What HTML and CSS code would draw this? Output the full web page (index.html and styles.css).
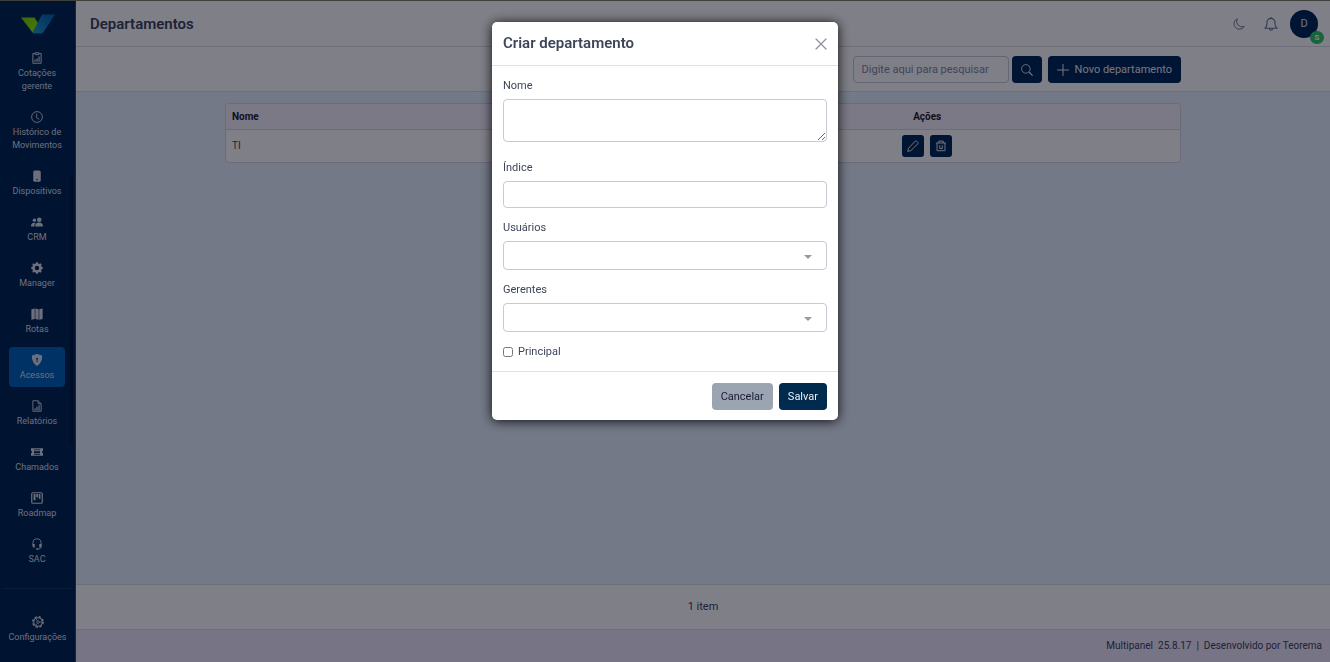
FILE: index.html
```html
<!DOCTYPE html>
<html lang="pt-BR">
<head>
  <meta charset="UTF-8">
  <meta name="viewport" content="width=device-width, initial-scale=1">
  <title>Departamentos</title>
  <link rel="stylesheet" href="styles.css">
</head>
<body>
  <div class="app">

    <!-- Sidebar -->
    <aside class="sidebar">
      <a href="#" class="logo" aria-label="Início">
        <svg width="34" height="20" viewBox="0 0 34 20">
          <defs>
            <linearGradient id="logoBlue" x1="1" y1="0" x2="0" y2="1">
              <stop offset="0" stop-color="#0062ae"/>
              <stop offset="1" stop-color="#22a0c8"/>
            </linearGradient>
            <linearGradient id="logoGreen" x1="0" y1="0" x2="1" y2="1">
              <stop offset="0" stop-color="#78d800"/>
              <stop offset="1" stop-color="#96f000"/>
            </linearGradient>
          </defs>
          <path d="M0 3.5h13.5l4.5 7-6.5 8z" fill="url(#logoGreen)"/>
          <path d="M21 .5h13L22.5 18a3 3 0 0 1-2.5 1.500H13a2 2 0 0 1-1.500-1z" fill="url(#logoBlue)"/>
        </svg>
      </a>
      <nav class="menu">
        <a href="#" class="menu-item">
          <svg class="icon" viewBox="0 0 16 16"><path d="M5 2H2.500v13h11V2H11M5.500 1h5v2.500h-5z" fill="none" stroke="currentColor" stroke-width="1.300"/><path d="M4.500 10h1.600v3H4.500zM7.200 8.500h1.600V13H7.200zM9.900 6h1.600v7H9.900z"/></svg>
          <span>Cotações gerente</span>
        </a>
        <a href="#" class="menu-item">
          <svg class="icon" viewBox="0 0 16 16"><circle cx="8" cy="8" r="7.200" fill="none" stroke="currentColor" stroke-width="1.200"/><path d="M7.500 3.500V9l3.500 2" fill="none" stroke="currentColor" stroke-width="1.200"/></svg>
          <span>Histórico de Movimentos</span>
        </a>
        <a href="#" class="menu-item">
          <svg class="icon" viewBox="0 0 16 16"><path fill-rule="evenodd" d="M5 .5h6a2 2 0 0 1 2 2v11a2 2 0 0 1-2 2H5a2 2 0 0 1-2-2v-11a2 2 0 0 1 2-2zM8 11.500a1 1 0 1 0 0 2 1 1 0 0 0 0-2z"/></svg>
          <span>Dispositivos</span>
        </a>
        <a href="#" class="menu-item">
          <svg class="icon" viewBox="0 0 16 16"><circle cx="11" cy="5" r="3"/><circle cx="4.500" cy="5.500" r="2.300"/><path d="M6.500 14c-1 0-1-1-1-1 0-1.500 1.500-4.200 5.200-4.200S16 11.500 16 13c0 0 0 1-1 1zM4.500 14H1c-1 0-1-1-1-1 0-1.500 1.200-4 4.500-4 .8 0 1.300.1 1.800.3C5 10.500 4.300 12 4.500 14z"/></svg>
          <span>CRM</span>
        </a>
        <a href="#" class="menu-item">
          <svg class="icon" viewBox="0 0 16 16"><path d="M9.405 1.050c-.413-1.400-2.397-1.400-2.810 0l-.1.340a1.464 1.464 0 0 1-2.105.872l-.31-.17c-1.283-.698-2.686.705-1.987 1.987l.169.311c.446.820.023 1.841-.872 2.105l-.34.1c-1.400.413-1.400 2.397 0 2.810l.34.1a1.464 1.464 0 0 1 .872 2.105l-.17.310c-.698 1.283.705 2.686 1.987 1.987l.311-.169a1.464 1.464 0 0 1 2.105.872l.1.340c.413 1.400 2.397 1.400 2.810 0l.1-.34a1.464 1.464 0 0 1 2.105-.872l.31.170c1.283.698 2.686-.705 1.987-1.987l-.169-.311a1.464 1.464 0 0 1 .872-2.105l.34-.1c1.400-.413 1.400-2.397 0-2.810l-.34-.1a1.464 1.464 0 0 1-.872-2.105l.17-.31c.698-1.283-.705-2.686-1.987-1.987l-.311.169a1.464 1.464 0 0 1-2.105-.872zM8 10.930a2.929 2.929 0 1 1 0-5.860 2.929 2.929 0 0 1 0 5.860z"/></svg>
          <span>Manager</span>
        </a>
        <a href="#" class="menu-item">
          <svg class="icon" viewBox="0 0 16 16"><path d="M.5 1.500L5 .5v14l-4.500 1zM5.800.5l4.400 1v14l-4.400-1zM11 1.500l4.500-1v14l-4.500 1z"/></svg>
          <span>Rotas</span>
        </a>
        <a href="#" class="menu-item active">
          <svg class="icon" viewBox="0 0 16 16"><path fill-rule="evenodd" d="M8 0c1 0 3.500 1 6 1.800.5.200.8.600.8 1 .4 5-1.800 10.200-6.800 13.200C3 13 .8 7.800 1.200 2.800c0-.4.300-.8.800-1C4.500 1 7 0 8 0zm0 5a1.500 1.500 0 0 0-.5 2.900L7 10.500h2l-.5-2.600A1.500 1.500 0 0 0 8 5z"/></svg>
          <span>Acessos</span>
        </a>
        <a href="#" class="menu-item">
          <svg class="icon" viewBox="0 0 16 16"><path d="M9.500 1h-7v14h11V5zM9.500 1v4h4" fill="none" stroke="currentColor" stroke-width="1.200"/><path d="M4.500 11h1.500v3H4.500zM7.200 9h1.600v5H7.200zM10 7h1.500v7H10z"/></svg>
          <span>Relatórios</span>
        </a>
        <a href="#" class="menu-item">
          <svg class="icon" viewBox="0 0 16 16"><path fill-rule="evenodd" d="M0 3h16v3.500a1.500 1.500 0 0 0 0 3V13H0V9.500a1.500 1.500 0 0 0 0-3zm4 1.500v1h8v-1zM4 7v2.500h8V7zm0 3.800v1h8v-1z"/></svg>
          <span>Chamados</span>
        </a>
        <a href="#" class="menu-item">
          <svg class="icon" viewBox="0 0 16 16"><rect x="1" y="1" width="14" height="14" rx="1.500" fill="none" stroke="currentColor" stroke-width="1.600"/><path d="M3.500 2.500H6V11H3.500zM7 2.500h2.300V7H7zM10.300 2.500h2.300V9h-2.300z"/></svg>
          <span>Roadmap</span>
        </a>
        <a href="#" class="menu-item">
          <svg class="icon" viewBox="0 0 16 16"><path d="M2.600 9V6.500a5.400 5.400 0 0 1 10.800 0V12c0 1.500-1 2.700-4.400 2.700" fill="none" stroke="currentColor" stroke-width="1.200"/><path d="M2 8h3v4.500H4a2 2 0 0 1-2-2zM11 8h3v2.500a2 2 0 0 1-2 2h-1zM7 13.700h2.500v2H7z"/></svg>
          <span>SAC</span>
        </a>
      </nav>
      <div class="menu-bottom">
        <a href="#" class="menu-item">
          <svg class="icon" viewBox="0 0 16 16"><circle cx="8" cy="8" r="5.700" fill="none" stroke="currentColor" stroke-width="1.500"/><circle cx="8" cy="8" r="7" fill="none" stroke="currentColor" stroke-width="1.800" stroke-dasharray="3 2.500"/><circle cx="8" cy="8" r="1.700" fill="none" stroke="currentColor"/><path d="M9.500 8H14M7.200 6.500L5 2.800M7.200 9.500L5 13.200" stroke="currentColor"/></svg>
          <span>Configurações</span>
        </a>
      </div>
      <div class="scroll-thumb"></div>
    </aside>

    <!-- Main -->
    <div class="main">
      <header class="topbar">
        <h1>Departamentos</h1>
        <div class="topbar-actions">
          <button type="button" class="icon-btn" aria-label="Tema escuro">
            <svg width="12" height="12" viewBox="0 0 16 16"><path d="M5.800 1A7.300 7.300 0 1 0 15 11.300 7.300 7.300 0 0 1 5.800 1z" fill="none" stroke="currentColor" stroke-width="1.200" stroke-linejoin="round"/></svg>
          </button>
          <button type="button" class="icon-btn" aria-label="Notificações">
            <svg width="14" height="14" viewBox="0 0 16 16"><path d="M8 1.500a4.500 4.500 0 0 0-4.500 4.500c0 3-.6 5.500-2.500 6.800h14c-1.900-1.300-2.500-3.800-2.500-6.800A4.500 4.500 0 0 0 8 1.500zM8 0v1.500M6.300 13.500a1.700 1.700 0 0 0 3.400 0" fill="none" stroke="currentColor" stroke-width="1.300" stroke-linejoin="round"/></svg>
          </button>
          <button type="button" class="avatar">D<span class="badge">S</span></button>
        </div>
      </header>

      <div class="toolbar">
        <form class="container search">
          <input type="text" class="control search-input" placeholder="Digite aqui para pesquisar" aria-label="Pesquisar">
          <button type="button" class="btn btn-primary btn-search" aria-label="Buscar">
            <svg width="12" height="12" viewBox="0 0 16 16"><circle cx="6.500" cy="6.500" r="5.700" fill="none" stroke="currentColor" stroke-width="1.200"/><path d="M10.700 10.700l4.800 4.800" stroke="currentColor" stroke-width="1.600"/></svg>
          </button>
          <button type="button" class="btn btn-primary">
            <svg width="12" height="12" viewBox="0 0 12 12"><path d="M6 .5v11M.5 6h11" stroke="currentColor" stroke-linecap="round"/></svg>
            Novo departamento
          </button>
        </form>
      </div>

      <main class="content">
        <div class="container">
          <table class="table">
            <thead>
              <tr><th class="col-name">Nome</th><th class="col-actions">Ações</th></tr>
            </thead>
            <tbody>
              <tr>
                <td>TI</td>
                <td class="col-actions">
                  <div class="row-actions">
                    <button type="button" class="btn-primary btn-row" aria-label="Editar">
                      <svg width="12" height="12" viewBox="0 0 16 16"><path d="M12.500 1.200l2.300 2.300c.4.400.4.800 0 1.200L5.200 14.200l-4.200 1 1-4.200L11.400 1.200c.4-.3.800-.3 1.100 0z" fill="none" stroke="currentColor" stroke-width="1.300"/></svg>
                    </button>
                    <button type="button" class="btn-primary btn-row" aria-label="Excluir">
                      <svg width="12" height="12" viewBox="0 0 16 16"><path d="M1.500 4h13M2.700 4v10.300h10.600V4M5 4V1.500h6V4M6.300 7v4.500h3.400V7" fill="none" stroke="currentColor" stroke-width="1.300"/></svg>
                    </button>
                  </div>
                </td>
              </tr>
            </tbody>
          </table>
        </div>
      </main>

      <div class="pager">1 item</div>
      <footer class="footer">
        <span>Multipanel&nbsp; 25.8.17</span>
        <span>|</span>
        <span>Desenvolvido por Teorema</span>
      </footer>
    </div>
  </div>

  <!-- Modal -->
  <div class="backdrop">
    <form class="modal" role="dialog" aria-modal="true" aria-labelledby="modalTitle">
      <div class="modal-header">
        <h2 id="modalTitle">Criar departamento</h2>
        <button type="button" class="close" aria-label="Fechar">
          <svg width="12" height="12" viewBox="0 0 12 12"><path d="M1 1l10 10M11 1L1 11" stroke="currentColor" stroke-width="1.200" stroke-linecap="round"/></svg>
        </button>
      </div>
      <div class="modal-body">
        <div class="field field-area">
          <label for="nome">Nome</label>
          <textarea id="nome" class="control"></textarea>
        </div>
        <div class="field">
          <label for="indice">Índice</label>
          <input id="indice" type="text" class="control">
        </div>
        <div class="field">
          <label for="usuarios">Usuários</label>
          <div class="select">
            <select id="usuarios" class="control"><option></option></select>
          </div>
        </div>
        <div class="field">
          <label for="gerentes">Gerentes</label>
          <div class="select">
            <select id="gerentes" class="control"><option></option></select>
          </div>
        </div>
        <div class="check">
          <input type="checkbox" id="principal">
          <label for="principal">Principal</label>
        </div>
      </div>
      <div class="modal-footer">
        <button type="button" class="btn btn-secondary">Cancelar</button>
        <button type="button" class="btn btn-primary">Salvar</button>
      </div>
    </form>
  </div>
</body>
</html>
```

FILE: styles.css
```css
/* Global Styles */
* {
  box-sizing: border-box;
}
body {
  margin: 0;
  font-family: Roboto, "Liberation Sans", sans-serif;
  font-size: 11px;
  line-height: 18px;
  color: #3d4659;
}
h1, h2 {
  margin: 0;
  font-size: 15px;
  font-weight: 600;
}
a {
  color: inherit;
  text-decoration: none;
}
button, input, select, textarea {
  font: inherit;
  color: inherit;
}
button {
  cursor: pointer;
}
svg {
  display: block;
  flex: none;
}

.app {
  display: flex;
  min-height: 100vh;
  border-top: 1px solid #7e7e63;
}

/* Sidebar */
.sidebar {
  position: relative;
  width: 76px;
  display: flex;
  flex-direction: column;
  background: #002850;
  border-right: 1px solid #1d4a86;
  color: #dcdee8;
}
.logo {
  height: 44px;
  display: flex;
  justify-content: center;
  padding-top: 13px;
}
.menu {
  flex: 1;
  display: flex;
  flex-direction: column;
  gap: 6px;
  padding: 0 10px 0 9px;
}
.menu-item {
  display: flex;
  flex-direction: column;
  align-items: center;
  gap: 3px;
  padding: 7px 0 5px;
  border-radius: 4px;
  font-size: 9px;
  line-height: 13px;
  text-align: center;
}
.menu-item.active {
  background: #0064b8;
}
.icon {
  width: 12px;
  height: 12px;
  fill: currentColor;
}
.menu-bottom {
  margin: 0 4px;
  padding: 20px 0 13px;
  border-top: 1px solid #173c66;
}
.scroll-thumb {
  position: absolute;
  top: 174px;
  right: 2px;
  width: 3px;
  height: 268px;
  border-radius: 2px;
  background: #001c40;
}

/* Main */
.main {
  flex: 1;
  display: flex;
  flex-direction: column;
  min-width: 0;
}
.container {
  width: 100%;
  max-width: 956px;
  margin: 0 auto;
}
.topbar {
  display: flex;
  align-items: center;
  justify-content: space-between;
  height: 46px;
  padding: 0 12px 0 14px;
  background: #fff;
  border-bottom: 1px solid #dcdce6;
}
.topbar-actions {
  display: flex;
  align-items: center;
  gap: 5px;
}
.icon-btn {
  display: flex;
  padding: 5px 7px;
  border: 0;
  background: none;
  color: #6c7490;
}
.avatar {
  position: relative;
  width: 28px;
  height: 28px;
  padding: 0;
  border: 0;
  border-radius: 50%;
  background: #002854;
  color: #e4e6f0;
}
.badge {
  position: absolute;
  right: -6px;
  bottom: -6px;
  width: 14px;
  height: 13px;
  border-radius: 7px;
  background: #34c868;
  color: #fff;
  font-size: 8px;
  font-weight: 700;
  line-height: 13px;
}
.toolbar {
  padding: 9px 16px 8px;
  background: #fff;
  border-bottom: 1px solid #dcdce6;
}
.search {
  display: flex;
  justify-content: flex-end;
}
.search-input {
  width: 156px;
}
.btn-search {
  margin: 0 6px 0 3px;
}

/* Controls */
.control {
  display: block;
  height: 27px;
  padding: 4px 8px;
  border: 1px solid #c6c9d6;
  border-radius: 4px;
  background: #fff;
  outline: none;
}
.control::placeholder {
  color: #8288a0;
  opacity: 1;
}
.btn {
  display: flex;
  align-items: center;
  gap: 6px;
  height: 27px;
  padding: 0 9px;
  border: 0;
  border-radius: 4px;
  white-space: nowrap;
}
.btn-primary {
  background: #002b4f;
  color: #e9edf3;
}
.app .btn-primary {
  background: #002854;
}
.btn-secondary {
  background: #9aa5b1;
  color: #1a1a33;
}

/* Table */
.content {
  flex: 1;
  padding: 11px 16px;
  background: #e6f2fd;
}
.table {
  width: 100%;
  border: 1px solid #d4d4e0;
  border-radius: 4px;
  border-spacing: 0;
  background: #fff;
  overflow: hidden;
}
.table th {
  height: 26px;
  padding: 0 6px;
  border-bottom: 1px solid #d9d7e4;
  background: #f8f2fc;
  color: #1c1f2e;
  font-size: 10px;
  font-weight: 700;
  text-align: left;
}
.table td {
  height: 32px;
  padding: 0 6px;
  font-size: 10px;
}
.table .col-name {
  width: 47%;
}
.table .col-actions {
  text-align: center;
}
.row-actions {
  display: flex;
  justify-content: center;
  gap: 6px;
}
.btn-row {
  display: flex;
  align-items: center;
  justify-content: center;
  width: 22px;
  height: 22px;
  padding: 0;
  border: 0;
  border-radius: 3px;
}

.pager {
  padding: 13px;
  background: #fff;
  border-top: 1px solid #dcdce6;
  text-align: center;
}
.footer {
  display: flex;
  justify-content: flex-end;
  gap: 5px;
  padding: 7px 8px;
  background: #eee8f8;
  border-top: 1px solid #dcdce6;
  font-size: 10px;
}

/* Modal */
.backdrop {
  position: fixed;
  inset: 0;
  padding: 22px 16px;
  background: rgba(0, 0, 18, 0.5);
}
.modal {
  width: 100%;
  max-width: 346px;
  margin: 0 auto;
  border-radius: 5px;
  background: #fff;
  box-shadow: 0 1px 12px rgba(0, 0, 0, 0.9);
}
.modal-header {
  display: flex;
  align-items: center;
  justify-content: space-between;
  padding: 10px 11px;
  border-bottom: 1px solid #dfe1e7;
}
.close {
  display: flex;
  padding: 5px 0;
  border: 0;
  background: none;
  color: #8b909c;
}
.modal-header h2 {
  line-height: 23px;
}
.modal-body {
  padding: 11px 11px 10px;
}
.field {
  display: flex;
  flex-direction: column;
  gap: 4px;
  margin-bottom: 11px;
}
.field-area {
  margin-bottom: 17px;
}
.field textarea {
  height: 43px;
  resize: vertical;
}
.select {
  position: relative;
}
.select select {
  width: 100%;
  height: 29px;
  appearance: none;
}
.select::after {
  content: "";
  position: absolute;
  top: 14px;
  right: 15px;
  border: 4px solid transparent;
  border-top-color: #999;
  border-bottom: 0;
  pointer-events: none;
}
.check {
  display: flex;
  align-items: center;
  gap: 5px;
}
.check input {
  width: 10px;
  height: 10px;
  margin: 0;
}
.modal-footer {
  display: flex;
  justify-content: flex-end;
  gap: 6px;
  padding: 11px 11px 10px;
  border-top: 1px solid #dfe1e7;
}
```
